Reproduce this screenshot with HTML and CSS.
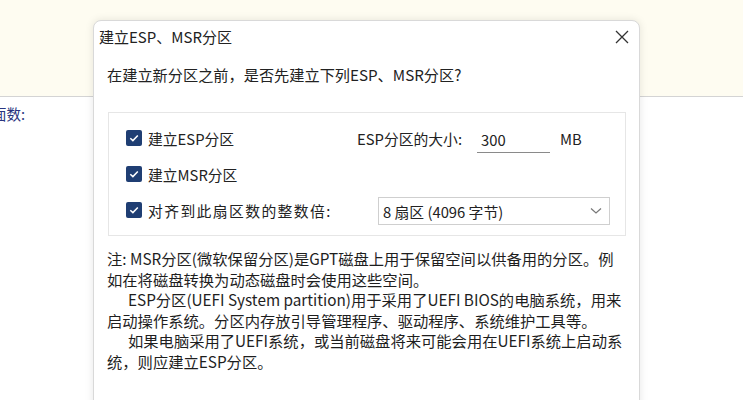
FILE: index.html
```html
<!DOCTYPE html>
<html lang="zh-CN">
<head>
<meta charset="utf-8">
<link rel="stylesheet" href="styles.css">
</head>
<body>
<div class="page">
  <div class="band"></div>
  <div class="content">
    <div class="field-label">面数:</div>
  </div>
</div>

<div class="dialog">
  <div class="titlebar">
    <span class="title">建立ESP、MSR分区</span>
    <span class="close">
      <svg width="14" height="14" viewBox="0 0 14 14"><path d="M1 1 L13 13 M13 1 L1 13" stroke="#333" stroke-width="1.3" fill="none"/></svg>
    </span>
  </div>
  <div class="body">
    <div class="question">在建立新分区之前，是否先建立下列ESP、MSR分区?</div>
    <div class="group">
      <div class="row">
        <label class="check"><span class="box"><svg width="12" height="12" viewBox="0 0 12 12"><path d="M2.3 6.2 L4.9 8.6 L9.8 3.4" stroke="#fff" stroke-width="1.5" fill="none"/></svg></span>建立ESP分区</label>
        <span class="size-label">ESP分区的大小:</span>
        <span class="size-input">300</span>
        <span class="unit">MB</span>
      </div>
      <div class="row">
        <label class="check"><span class="box"><svg width="12" height="12" viewBox="0 0 12 12"><path d="M2.3 6.2 L4.9 8.6 L9.8 3.4" stroke="#fff" stroke-width="1.5" fill="none"/></svg></span>建立MSR分区</label>
      </div>
      <div class="row">
        <label class="check align"><span class="box"><svg width="12" height="12" viewBox="0 0 12 12"><path d="M2.3 6.2 L4.9 8.6 L9.8 3.4" stroke="#fff" stroke-width="1.5" fill="none"/></svg></span><span class="spaced">对齐到此扇区数的整数倍:</span></label>
        <span class="select"><span>8 扇区 (4096 字节)</span>
          <svg width="12" height="8" viewBox="0 0 12 8"><path d="M1 1.5 L6 6 L11 1.5" stroke="#777" stroke-width="1.2" fill="none"/></svg>
        </span>
      </div>
    </div>
    <div class="note">
      <p>注: MSR分区(微软保留分区)是GPT磁盘上用于保留空间以供备用的分区。例<br>如在将磁盘转换为动态磁盘时会使用这些空间。</p>
      <p class="ind">ESP分区(UEFI System partition)用于采用了UEFI BIOS的电脑系统，用来<br>启动操作系统。分区内存放引导管理程序、驱动程序、系统维护工具等。</p>
      <p class="ind">如果电脑采用了UEFI系统，或当前磁盘将来可能会用在UEFI系统上启动系<br>统，则应建立ESP分区。</p>
    </div>
  </div>
</div>
</body>
</html>
```
FILE: styles.css
```css
* { box-sizing: border-box; }
html, body { margin: 0; padding: 0; }
body {
  width: 743px;
  height: 400px;
  overflow: hidden;
  background: #ffffff;
  font-family: "Noto Sans CJK SC", "Noto Sans", sans-serif;
  color: #1e1e1e;
  position: relative;
}
.page { display: flex; flex-direction: column; }
.band {
  height: 97px;
  background: #fefcf1;
  border-bottom: 1px solid #d4d4d4;
}
.content { padding-top: 7px; }
.field-label {
  margin-left: -8px;
  font-size: 14.5px;
  line-height: 20px;
  color: #2a3580;
}
.dialog {
  position: absolute;
  left: 93px;
  top: 20px;
  width: 547px;
  height: 400px;
  background: #fff;
  border: 1px solid #d9d9d9;
  border-radius: 8px 8px 0 0;
  box-shadow: 0 0 8px rgba(0,0,0,0.10);
}
.titlebar {
  height: 30px;
  display: flex;
  align-items: center;
  justify-content: space-between;
  padding: 0 10px 0 5px;
}
.title { font-size: 15px; color: #222; }
.close { display: flex; margin-top: 1px; }
.body { padding: 13px 13px 0 13px; }
.question { font-size: 15.2px; line-height: 20px; color: #222; }
.group {
  margin-top: 28px;
  margin-left: 1px;
  width: 518px;
  height: 124px;
  border: 1px solid #e6e6e6;
  padding: 7px 0 0 17px;
  display: flex;
  flex-direction: column;
}
.row {
  height: 36px;
  display: flex;
  align-items: center;
  font-size: 14.8px;
  color: #222;
}
.check {
  display: flex;
  align-items: center;
  width: 231px;
}
.check.align { width: 252px; }
.spaced { letter-spacing: 1.4px; }
.box {
  width: 16px;
  height: 16px;
  background: #1f3e73;
  border-radius: 2px;
  display: flex;
  align-items: center;
  justify-content: center;
  margin-right: 6px;
}
.size-label { width: 120px; }
.size-input {
  width: 73px;
  height: 26px;
  padding: 2px 0 0 4px;
  border-bottom: 1px solid #8a8a8a;
  margin-top: 4px;
}
.unit { margin-left: 10px; }
.select {
  width: 232px;
  height: 28px;
  border: 1px solid #cfcfcf;
  display: flex;
  align-items: center;
  justify-content: space-between;
  padding: 0 7px 0 4px;
  margin-top: 2px;
}
.note {
  margin-top: 12px;
  font-size: 15.3px;
  line-height: 20.6px;
  color: #1e1e1e;
}
.note p { margin: 0; white-space: nowrap; }
.note p.ind { text-indent: 21px; }
```
